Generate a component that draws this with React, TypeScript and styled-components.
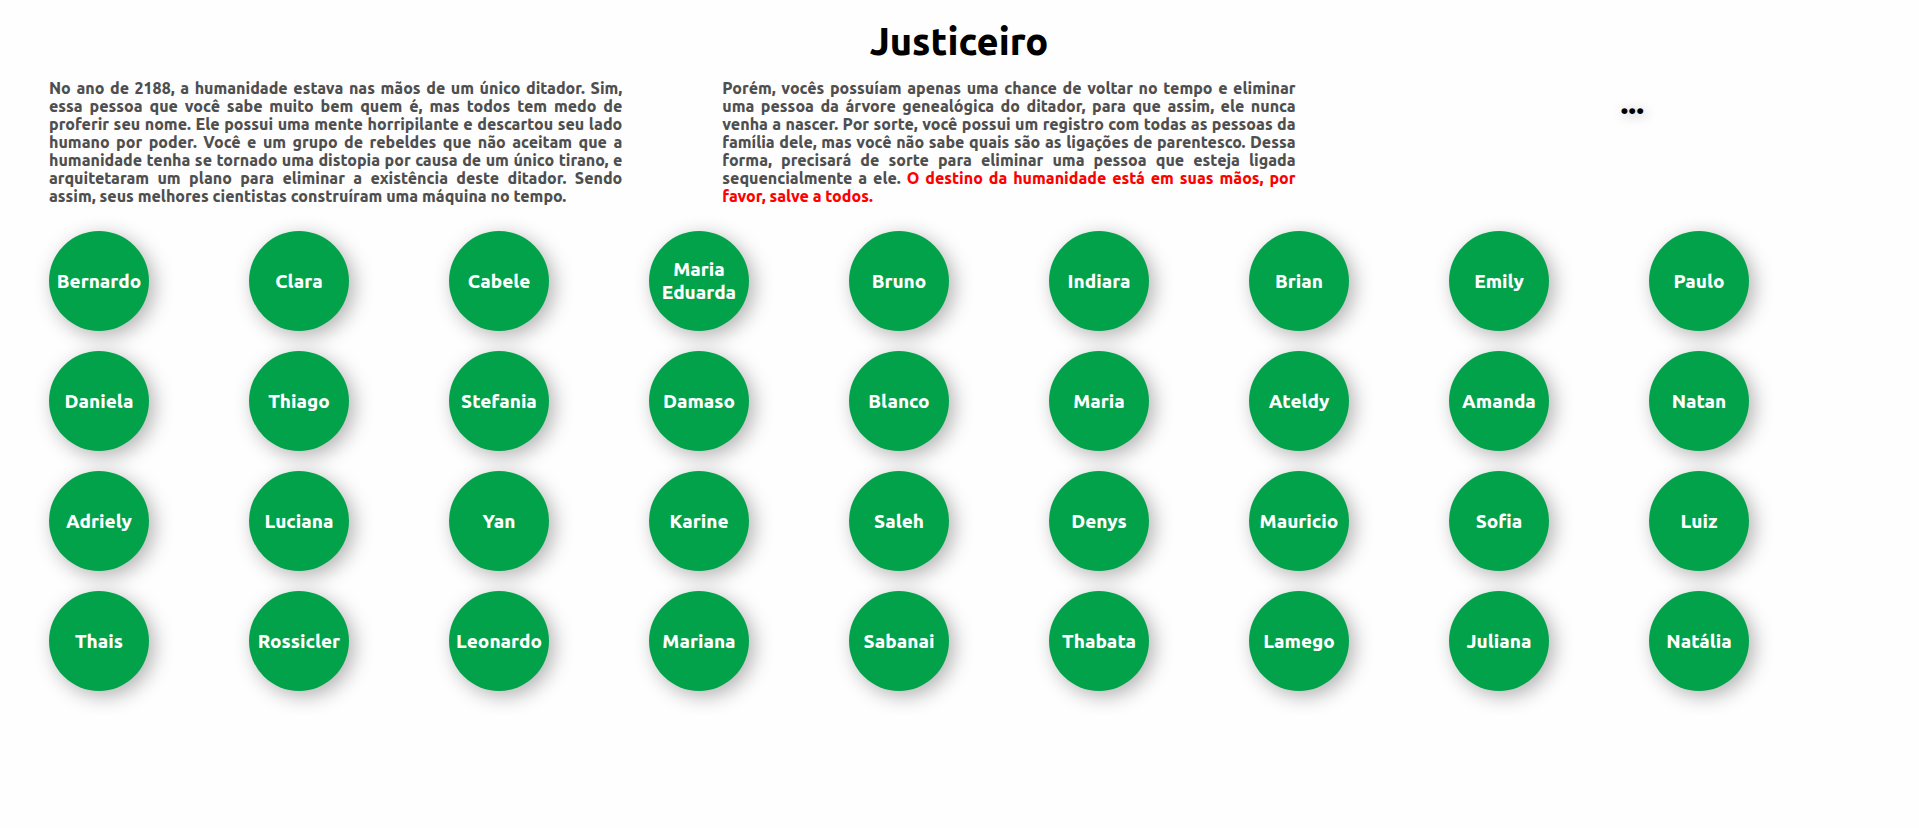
import React, { useState } from 'react';
import styled, { createGlobalStyle } from 'styled-components';

const GlobalStyle = createGlobalStyle`
  * {
    box-sizing: border-box;
  }

  body {
    margin: 0;
    background: #fefefe;
    color: #000;
    font-family: Ubuntu, "Noto Sans", sans-serif;
    font-weight: 800;
  }
`;

const Page = styled.main`
  display: flex;
  flex-direction: column;
  padding: 17px 50px 24px 49px;
`;

const Title = styled.h1`
  margin: 0 0 14px;
  font-size: 38px;
  font-weight: 800;
  line-height: 48px;
  text-align: center;
`;

const Intro = styled.section`
  display: grid;
  grid-template-columns: 574fr 574fr 474fr;
  gap: 100px;
  margin-bottom: 26px;
`;

const Story = styled.p`
  margin: 0;
  color: #4f4f4f;
  font-size: 16px;
  line-height: 18px;
  text-align: justify;
`;

const Warning = styled.strong`
  color: #ff0000;
  font-weight: 800;
`;

const Result = styled.output`
  align-self: start;
  padding-top: 5px;
  font-size: 32px;
  line-height: 36px;
  text-align: center;
  text-shadow: 2px 2px 12px rgba(0, 0, 0, 0.3);
`;

const People = styled.div`
  display: grid;
  grid-template-columns: repeat(auto-fill, 100px);
  gap: 20px 100px;
`;

const Person = styled.button`
  width: 100px;
  height: 100px;
  padding: 0;
  border: none;
  border-radius: 50%;
  background: #02a24b;
  box-shadow: 5px 5px 20px rgba(0, 0, 0, 0.3);
  color: #fff;
  font-family: inherit;
  font-size: 19px;
  font-weight: 800;
  line-height: 23px;
  cursor: pointer;
`;

const names = [
  'Bernardo', 'Clara', 'Cabele', 'Maria Eduarda', 'Bruno', 'Indiara', 'Brian', 'Emily', 'Paulo',
  'Daniela', 'Thiago', 'Stefania', 'Damaso', 'Blanco', 'Maria', 'Ateldy', 'Amanda', 'Natan',
  'Adriely', 'Luciana', 'Yan', 'Karine', 'Saleh', 'Denys', 'Mauricio', 'Sofia', 'Luiz',
  'Thais', 'Rossicler', 'Leonardo', 'Mariana', 'Sabanai', 'Thabata', 'Lamego', 'Juliana', 'Natália',
];

export default function App() {
  const [chosen, setChosen] = useState('...');

  return (
    <>
      <GlobalStyle />
      <Page>
        <Title>Justiceiro</Title>
        <Intro>
          <Story>
            No ano de 2188, a humanidade estava nas mãos de um único ditador. Sim, essa pessoa que
            você sabe muito bem quem é, mas todos tem medo de proferir seu nome. Ele possui uma
            mente horripilante e descartou seu lado humano por poder. Você e um grupo de rebeldes
            que não aceitam que a humanidade tenha se tornado uma distopia por causa de um único
            tirano, e arquitetaram um plano para eliminar a existência deste ditador. Sendo assim,
            seus melhores cientistas construíram uma máquina no tempo.
          </Story>
          <Story>
            Porém, vocês possuíam apenas uma chance de voltar no tempo e eliminar uma pessoa da
            árvore genealógica do ditador, para que assim, ele nunca venha a nascer. Por sorte,
            você possui um registro com todas as pessoas da família dele, mas você não sabe quais
            são as ligações de parentesco. Dessa forma, precisará de sorte para eliminar uma
            pessoa que esteja ligada sequencialmente a ele.{' '}
            <Warning>O destino da humanidade está em suas mãos, por favor, salve a todos.</Warning>
          </Story>
          <Result>{chosen}</Result>
        </Intro>
        <People>
          {names.map((name) => (
            <Person key={name} type="button" onClick={() => setChosen(name)}>
              {name}
            </Person>
          ))}
        </People>
      </Page>
    </>
  );
}
